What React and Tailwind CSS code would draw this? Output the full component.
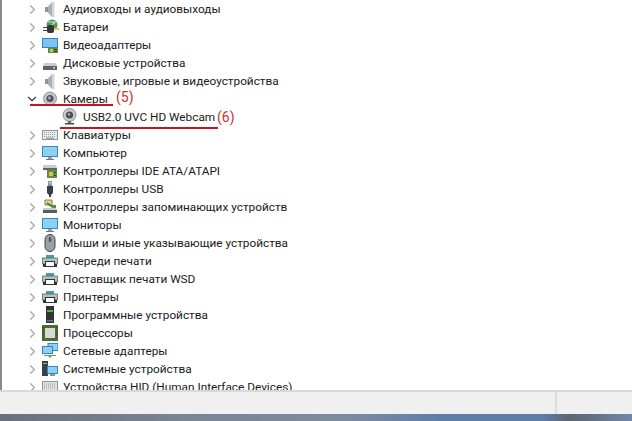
import { ChevronRight, ChevronDown } from 'lucide-react';

function Speaker() {
  return (
    <svg width="16" height="16" viewBox="0 0 16 16">
      <path d="M3 6h3v5H3z" fill="#8d9499" />
      <path d="M6 5.5 10 1v15l-4-4.5z" fill="#a9afb3" />
      <path d="M10 1h2.5v15H10z" fill="#d3d7d9" />
    </svg>
  );
}

function Battery() {
  return (
    <svg width="18" height="16" viewBox="0 0 18 16">
      <circle cx="10" cy="6" r="5.5" fill="#4f9a5a" />
      <path d="M6 3h8M7 9l6-6" stroke="#bfe3c2" strokeWidth="1.2" />
      <path d="M1 8h5v1H1zM1 11h5v1H1z" fill="#4a4a2a" />
      <rect x="5" y="6" width="7" height="8" rx="2" fill="#30363a" />
      <path d="M12 9h5v2h-5z" fill="#e8c94a" />
    </svg>
  );
}

function Display() {
  return (
    <svg width="16" height="16" viewBox="0 0 16 16">
      <rect x="0" y="1" width="16" height="10" fill="#2f88c9" />
      <rect x="1" y="2" width="14" height="8" fill="#7fc4ec" />
      <path d="M6 11h10v5H6z" fill="#5f8f3c" />
      <path d="M8 12h3v3H8z" fill="#d8c24d" />
      <path d="M12 12h3v1h-3zM12 14h3v1h-3z" fill="#2e4d1d" />
    </svg>
  );
}

function Disk() {
  return (
    <svg width="16" height="16" viewBox="0 0 16 16">
      <path d="M2 8h12l1 3H1z" fill="#c9cdd0" />
      <rect x="1" y="11" width="14" height="4" fill="#5e6367" />
      <rect x="11" y="12" width="2" height="1.5" fill="#cfd3d5" />
    </svg>
  );
}

function Camera() {
  return (
    <svg width="16" height="16" viewBox="0 0 16 16">
      <circle cx="8" cy="7.5" r="6.5" fill="#c4c8ca" stroke="#8e9396" />
      <circle cx="8" cy="7.5" r="3.6" fill="#50565a" />
      <circle cx="7.5" cy="7" r="1.4" fill="#a8aeb2" />
    </svg>
  );
}

function Webcam() {
  return (
    <svg width="16" height="18" viewBox="0 0 16 18">
      <circle cx="7.5" cy="7" r="6.5" fill="#c6cacc" stroke="#8e9396" />
      <circle cx="7.5" cy="7" r="3.6" fill="#474d51" />
      <circle cx="7" cy="6.5" r="1.4" fill="#9fa6aa" />
      <path d="M6 13h3v2H6z" fill="#6b7074" />
      <path d="M3 15h9v1.5H3z" fill="#3f4447" />
    </svg>
  );
}

function Keyboard() {
  return (
    <svg width="16" height="16" viewBox="0 0 16 16">
      <rect x="0.5" y="3.5" width="15" height="9" fill="#e8eaeb" stroke="#8d9396" />
      <path d="M2 5.5h12M2 7.5h12M2 9.5h12" stroke="#9ba1a5" strokeDasharray="1 1" />
      <path d="M4 11.2h8" stroke="#7e8488" />
    </svg>
  );
}

function Monitor() {
  return (
    <svg width="16" height="16" viewBox="0 0 16 16">
      <rect x="0" y="1" width="16" height="11" fill="#2f88c9" />
      <rect x="1" y="2" width="14" height="9" fill="#8fd0f2" />
      <path d="M6 12h4v2H6z" fill="#9aa0a4" />
      <path d="M4 14h8v1H4z" fill="#6f7579" />
    </svg>
  );
}

function IdeCard() {
  return (
    <svg width="16" height="16" viewBox="0 0 16 16">
      <path d="M1 2h13l1 3H1z" fill="#c9cdd0" />
      <rect x="1" y="5" width="14" height="2" fill="#5e6367" />
      <rect x="5" y="7" width="10" height="8" fill="#5f8f3c" />
      <rect x="7" y="9" width="4" height="4" fill="#d8c24d" />
      <path d="M12 9h2v1h-2zM12 12h2v1h-2z" fill="#2e4d1d" />
    </svg>
  );
}

function Usb() {
  return (
    <svg width="16" height="16" viewBox="0 0 16 16">
      <rect x="6" y="0" width="4" height="5" fill="#8f9599" />
      <path d="M7 1h.8v1.5H7zM8.4 1h.8v1.5h-.8z" fill="#eef0f1" />
      <path d="M5 5h6v7l-2 2v2H7v-2l-2-2z" fill="#3a3f43" />
    </svg>
  );
}

function Storage() {
  return (
    <svg width="16" height="16" viewBox="0 0 16 16">
      <path d="M3 1h7v5H3z" fill="#e3d88c" stroke="#5f6a3a" strokeWidth="0.8" />
      <path d="M5 4 12 9" stroke="#3f7f3f" strokeWidth="1.6" />
      <path d="M1 9h13l1 2H1z" fill="#c9cdd0" />
      <rect x="1" y="11" width="14" height="3" fill="#565b5f" />
      <path d="M10 6h4v3h-4z" fill="#5f8f3c" />
    </svg>
  );
}

function Mouse() {
  return (
    <svg width="16" height="18" viewBox="0 0 16 18">
      <rect x="3" y="0.5" width="10" height="17" rx="5" fill="#9aa1a6" stroke="#3d4246" />
      <rect x="6.8" y="3" width="2.4" height="5" rx="1.2" fill="#50565a" />
    </svg>
  );
}

function Printer() {
  return (
    <svg width="16" height="16" viewBox="0 0 16 16">
      <rect x="4" y="2" width="8" height="3" fill="#3fa0a8" />
      <rect x="0.5" y="5" width="15" height="6" fill="#b9bec1" stroke="#5f6569" strokeWidth="0.8" />
      <rect x="3.5" y="8.5" width="9" height="5" fill="#fdfdfd" stroke="#2f3437" />
      <path d="M1 11h2v3H1zM13 11h2v3h-2z" fill="#2f3437" />
    </svg>
  );
}

function Firmware() {
  return (
    <svg width="16" height="18" viewBox="0 0 16 18">
      <rect x="4" y="0" width="8" height="17" fill="#2f3437" />
      <rect x="5" y="4" width="6" height="2" fill="#58b04c" />
      <rect x="5" y="14" width="6" height="1.5" fill="#6f7579" />
    </svg>
  );
}

function Cpu() {
  return (
    <svg width="16" height="16" viewBox="0 0 16 16">
      <rect x="0" y="0" width="16" height="16" fill="#4f6b33" />
      <rect x="3" y="3" width="10" height="10" fill="#d6dad2" />
      <path d="M1 2v12M15 2v12" stroke="#2f4620" strokeDasharray="1 1" />
    </svg>
  );
}

function Network() {
  return (
    <svg width="16" height="16" viewBox="0 0 16 16">
      <rect x="6" y="0.5" width="10" height="7" fill="#8fd0f2" stroke="#2f88c9" />
      <rect x="0.5" y="3.5" width="10" height="7" fill="#8fd0f2" stroke="#2f88c9" />
      <path d="M5 12h6l-3 3z" fill="#58b04c" />
      <path d="M2 12h12v1H2z" fill="#58b04c" />
    </svg>
  );
}

function SystemDev() {
  return (
    <svg width="16" height="16" viewBox="0 0 16 16">
      <rect x="0" y="0" width="6" height="15" fill="#3b4045" />
      <rect x="1" y="2" width="4" height="1" fill="#a8aeb2" />
      <rect x="5" y="5" width="11" height="8" fill="#2f88c9" />
      <rect x="6" y="6" width="9" height="6" fill="#8fd0f2" />
      <path d="M8 13h5v2H8z" fill="#8d9499" />
    </svg>
  );
}

function Hid() {
  return (
    <svg width="16" height="16" viewBox="0 0 16 16">
      <rect x="0.5" y="2.5" width="15" height="10" fill="#dfe3e6" stroke="#8d9396" />
      <path d="M2 5h12M2 7h12M2 9h12" stroke="#8fa0ad" strokeDasharray="1 1" />
    </svg>
  );
}

const rows = [
  { label: 'Аудиовходы и аудиовыходы', Icon: Speaker },
  { label: 'Батареи', Icon: Battery },
  { label: 'Видеоадаптеры', Icon: Display },
  { label: 'Дисковые устройства', Icon: Disk },
  { label: 'Звуковые, игровые и видеоустройства', Icon: Speaker },
  { label: 'Камеры', Icon: Camera, open: true },
  { label: 'USB2.0 UVC HD Webcam', Icon: Webcam, child: true },
  { label: 'Клавиатуры', Icon: Keyboard },
  { label: 'Компьютер', Icon: Monitor },
  { label: 'Контроллеры IDE ATA/ATAPI', Icon: IdeCard },
  { label: 'Контроллеры USB', Icon: Usb },
  { label: 'Контроллеры запоминающих устройств', Icon: Storage },
  { label: 'Мониторы', Icon: Monitor },
  { label: 'Мыши и иные указывающие устройства', Icon: Mouse },
  { label: 'Очереди печати', Icon: Printer },
  { label: 'Поставщик печати WSD', Icon: Printer },
  { label: 'Принтеры', Icon: Printer },
  { label: 'Программные устройства', Icon: Firmware },
  { label: 'Процессоры', Icon: Cpu },
  { label: 'Сетевые адаптеры', Icon: Network },
  { label: 'Системные устройства', Icon: SystemDev },
  { label: 'Устройства HID (Human Interface Devices)', Icon: Hid },
];

function Row({ label, Icon, open, child }) {
  if (child) {
    return (
      <div className="h-[18px] flex items-center pl-[60px]">
        <span className="w-[21px] flex items-center">
          <Icon />
        </span>
        <span>{label}</span>
      </div>
    );
  }
  return (
    <div className="h-[18px] flex items-center pl-[23px]">
      <span className="w-[17px] flex items-center">
        {open ? (
          <ChevronDown size={14} strokeWidth={2} className="text-[#3a3a3a]" />
        ) : (
          <ChevronRight size={15} strokeWidth={2} className="text-[#a6a6a6]" />
        )}
      </span>
      <span className="w-[21px] flex items-center">
        <Icon />
      </span>
      <span>{label}</span>
    </div>
  );
}

export default function App() {
  return (
    <div className="relative w-[632px] h-[421px] flex flex-col overflow-hidden bg-white text-[11.8px] leading-[18px] text-[#1a1a1a] font-['Roboto','Liberation_Sans',sans-serif]">
      <div className="flex-1 min-h-0 overflow-hidden border-l-2 border-[#8a8a8a]">
        {rows.map(row => (
          <Row key={row.label} {...row} />
        ))}
      </div>

      <div className="h-[24px] flex border-t-2 border-[#d9d9d9] bg-[#f0f0f0]">
        <div className="w-[557px] border-r-2 border-[#dcdcdc]" />
      </div>
      <div className="h-[7px] bg-[linear-gradient(90deg,#6a717c_0%,#7a8595_30%,#7d8ba0_55%,#5f7da8_70%,#5f7da6_86%,#5c6470_90%,#7187a8_100%)]" />

      <div className="absolute left-[30px] top-[104px] w-[83px] h-[2px] bg-[#c8141c]" />
      <div className="absolute left-[60px] top-[127px] w-[158px] h-[2px] bg-[#c8141c]" />
      <span className="absolute left-[116px] top-[88px] text-[14px] text-[#c8342c]">(5)</span>
      <span className="absolute left-[217px] top-[108px] text-[14px] text-[#c8342c]">(6)</span>
    </div>
  );
}
